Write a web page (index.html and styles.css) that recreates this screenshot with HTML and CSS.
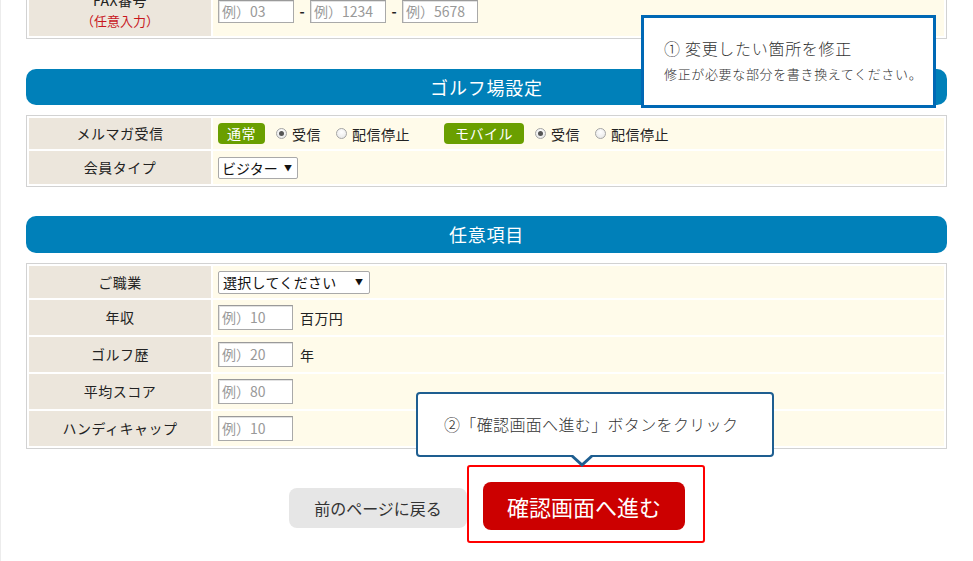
FILE: index.html
```html
<!DOCTYPE html>
<html lang="ja">
<head>
<meta charset="utf-8">
<title>会員情報変更</title>
<link rel="stylesheet" href="styles.css">
</head>
<body>
<div class="screen">
  <div class="page">
    <table class="form first">
      <tr class="h-fax">
        <th>FAX番号<br><span class="opt">（任意入力）</span></th>
        <td>
          <div class="fields">
            <span class="input ph">例）03</span><span class="dash">-</span><span class="input ph">例）1234</span><span class="dash">-</span><span class="input ph">例）5678</span>
          </div>
        </td>
      </tr>
    </table>

    <h2 class="sec">ゴルフ場設定</h2>
    <table class="form">
      <tr class="h31">
        <th>メルマガ受信</th>
        <td>
          <div class="fields">
            <span class="badge">通常</span>
            <span class="radio on"></span><span class="rl">受信</span>
            <span class="radio"></span><span class="rl">配信停止</span>
            <span class="badge mob">モバイル</span>
            <span class="radio on"></span><span class="rl">受信</span>
            <span class="radio"></span><span class="rl">配信停止</span>
          </div>
        </td>
      </tr>
      <tr class="h33">
        <th>会員タイプ</th>
        <td><span class="select s-visitor">ビジター<span class="arr">▼</span></span></td>
      </tr>
    </table>

    <h2 class="sec sec2">任意項目</h2>
    <table class="form">
      <tr class="h32">
        <th>ご職業</th>
        <td><span class="select s-job">選択してください<span class="arr">▼</span></span></td>
      </tr>
      <tr class="h35">
        <th>年収</th>
        <td><div class="fields"><span class="input ph">例）10</span><span class="unit">百万円</span></div></td>
      </tr>
      <tr class="h35">
        <th>ゴルフ歴</th>
        <td><div class="fields"><span class="input ph">例）20</span><span class="unit">年</span></div></td>
      </tr>
      <tr class="h35">
        <th>平均スコア</th>
        <td><div class="fields"><span class="input ph">例）80</span></div></td>
      </tr>
      <tr class="h35">
        <th>ハンディキャップ</th>
        <td><div class="fields"><span class="input ph">例）10</span></div></td>
      </tr>
    </table>

    <div class="actions">
      <button class="btn back">前のページに戻る</button>
      <div class="submit-wrap">
        <button class="btn submit">確認画面へ進む</button>
        <span class="frame"></span>
      </div>
    </div>
  </div>

  <div class="callout c1">
    <p class="c-title">① 変更したい箇所を修正</p>
    <p class="c-sub">修正が必要な部分を書き換えてください。</p>
  </div>
  <div class="callout c2">
    <p class="c-title">②「確認画面へ進む」ボタンをクリック</p>
  </div>
</div>
</body>
</html>
```
FILE: styles.css
```css
* { box-sizing: border-box; }
html, body { margin: 0; padding: 0; background: #fff; }
body {
  font-family: "Noto Sans CJK JP", "Noto Sans", sans-serif;
  color: #222;
  font-size: 14px;
  line-height: 20px;
}
.screen {
  position: relative;
  display: flow-root;
  width: 973px;
  height: 561px;
  overflow: hidden;
  border-left: 1px solid #ececec;
}
.page {
  margin: 0 26px 0 25px;
}

/* tables */
.form {
  width: 100%;
  border: 1px solid #d2d2d2;
  border-spacing: 2px;
  border-collapse: separate;
}
.form.first { margin-top: -17px; }
.form th {
  width: 182px;
  background: #ece6dc;
  font-weight: normal;
  font-size: 14px;
  letter-spacing: 0.5px;
  text-align: center;
  line-height: 20px;
  padding: 0 4px 1px;
  color: #222;
}
.form td {
  background: #fffbea;
  padding: 0 5px;
  vertical-align: middle;
}
.h-fax th, .h-fax td { height: 50px; }
.h31 th, .h31 td { height: 31px; }
.h33 th, .h33 td { height: 33px; }
.h32 th, .h32 td { height: 32px; }
.h35 th, .h35 td { height: 35px; }
.opt { color: #c8161d; font-size: 13px; letter-spacing: 0; }

.fields { display: flex; align-items: center; }

.input {
  display: inline-block;
  width: 75px;
  height: 25px;
  border: 1px solid #a9a9a9;
  border-top-color: #9a9a9a;
  background: #fff;
  font-size: 14px;
  line-height: 23px;
  padding-left: 3px;
  box-shadow: inset 1px 1px 0 #e2e2e2;
}
.h-fax .input { height: 23px; line-height: 21px; width: 76px; }
.ph { color: #999; }
.dash { width: 16px; text-align: center; font-size: 14px; color: #222; font-weight: bold; }
.unit { margin-left: 7px; font-size: 14px; color: #222; letter-spacing: 0.4px; }

.badge {
  display: inline-block;
  background: #6a9f00;
  color: #fff;
  font-size: 14px;
  line-height: 21px;
  height: 21px;
  padding: 0 9px;
  letter-spacing: 0.5px;
  border-radius: 4px;
  margin-right: 11px;
}
.badge.mob { margin-left: 19px; padding: 0 11px; }
.radio {
  display: inline-block;
  width: 11px;
  height: 11px;
  border-radius: 50%;
  border: 1px solid #a5a5a5;
  background: radial-gradient(circle at 50% 35%, #fff 0%, #e4e4e4 100%);
  position: relative;
  margin-right: 5px;
}
.radio.on::after {
  content: "";
  position: absolute;
  left: 2px; top: 2px;
  width: 5px; height: 5px;
  border-radius: 50%;
  background: #555;
}
.rl { font-size: 14px; color: #222; margin-right: 15px; letter-spacing: 0.5px; }
.fields .rl:last-child { margin-right: 0; }

.select {
  display: inline-flex;
  align-items: center;
  justify-content: space-between;
  white-space: nowrap;
  height: 23px;
  border: 1px solid #a9a9a9;
  border-radius: 2px;
  background: #fff;
  font-size: 14px;
  color: #111;
  padding: 0 6px 0 4px;
  vertical-align: middle;
}
.s-visitor { width: 80px; height: 22px; padding: 0 5px 0 3px; }
.s-job { width: 152px; letter-spacing: 0.3px; }
.arr { font-size: 8px; color: #111; letter-spacing: 0; }

/* section header */
.sec {
  margin: 30px 0 10px;
  height: 36px;
  line-height: 36px;
  background: #0080b9;
  color: #fff;
  text-align: center;
  font-size: 18px;
  letter-spacing: 0.8px;
  font-weight: normal;
  border-radius: 10px;
}
.sec2 { margin-top: 29px; height: 37px; line-height: 37px; }

/* buttons */
.actions {
  display: flex;
  justify-content: center;
  align-items: center;
  gap: 16px;
  margin-top: 33px;
  padding-left: 1px;
}
.btn {
  font-family: inherit;
  border: 0;
  cursor: pointer;
  border-radius: 8px;
}
.back {
  width: 178px;
  height: 40px;
  background: #e6e6e6;
  color: #333;
  font-size: 16px;
  margin-top: 4px;
}
.submit-wrap { position: relative; }
.submit {
  display: block;
  width: 202px;
  height: 48px;
  background: #cc0000;
  color: #fff;
  font-size: 22px;
}
.frame {
  position: absolute;
  left: -16px; top: -17px; right: -20px; bottom: -13px;
  border: 2px solid #ff0000;
  border-radius: 3px;
  pointer-events: none;
}

/* callouts */
.callout {
  position: absolute;
  background: #fff;
}
.callout p { margin: 0; }
.c1 {
  left: 640px; top: 15px;
  width: 295px; height: 93px;
  border: 3px solid #0068b5;
  padding: 19px 0 0 20px;
}
.c1 .c-title { font-size: 16px; line-height: 22px; color: #333; letter-spacing: 0.7px; font-weight: 300; }
.c1 .c-sub { font-size: 13px; line-height: 18px; margin-top: 6px; color: #333; letter-spacing: 0.65px; font-weight: 300; }
.c2 {
  left: 415px; top: 392px;
  width: 358px; height: 65px;
  border: 2px solid #1e5e90;
  border-radius: 4px;
  padding: 19px 0 0 26px;
}
.c2 .c-title { font-size: 16px; line-height: 22px; color: #333; letter-spacing: 0.35px; font-weight: 300; }
.c2::before, .c2::after {
  content: "";
  position: absolute;
  width: 0; height: 0;
  border-style: solid;
  border-color: transparent;
}
.c2::before {
  left: 151px; top: 100%;
  border-width: 12px 13px 0 13px;
  border-top-color: #1e5e90;
}
.c2::after {
  left: 154px; top: 100%;
  margin-top: -1px;
  border-width: 9px 10px 0 10px;
  border-top-color: #fff;
}
```
